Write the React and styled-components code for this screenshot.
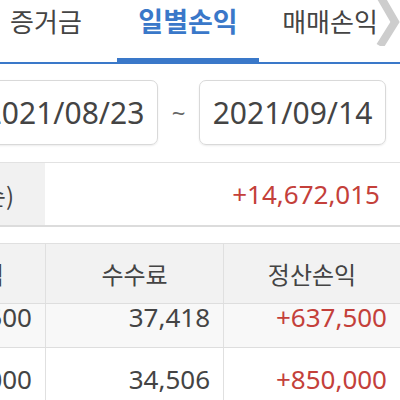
import React from 'react'
import styled, { createGlobalStyle } from 'styled-components'

const Global = createGlobalStyle`
  html, body {
    margin: 0;
    padding: 0;
    background: #fff;
    overflow: hidden;
  }
  body {
    font-family: "Noto Sans", "Noto Sans CJK KR", sans-serif;
    color: #444;
  }
`

const Screen = styled.div`
  position: relative;
  width: 400px;
  height: 400px;
  overflow: hidden;
  background: #fff;
`

const TabBar = styled.div`
  display: flex;
  height: 64px;
  margin-left: -25px;
  box-shadow: inset 0 -2px 0 #3a78c9;
`

const Tab = styled.div`
  flex: 0 0 142px;
  display: flex;
  justify-content: center;
  line-height: 42px;
  font-family: "Noto Sans CJK KR", sans-serif;
  font-size: ${p => (p.active ? '27px' : '26px')};
  font-weight: ${p => (p.active ? 700 : 400)};
  color: ${p => (p.active ? '#3a78c9' : '#444')};
  box-shadow: ${p => (p.active ? 'inset 0 -6px 0 #3a78c9' : 'none')};
  white-space: nowrap;
`

const Chevron = styled.svg`
  position: absolute;
  top: 0;
  right: 0;
`

const DateRow = styled.div`
  display: flex;
  align-items: center;
  margin: 16px 0 0 -29px;
`

const DateBox = styled.div`
  flex: 0 0 185px;
  height: 63px;
  box-sizing: content-box;
  display: flex;
  align-items: center;
  justify-content: center;
  border: 1px solid #d9d9d9;
  border-radius: 7px;
  box-shadow: 0 1px 2px rgba(0, 0, 0, 0.08);
  font-size: 30px;
  color: #444;
`

const Tilde = styled.span`
  flex: 0 0 41px;
  text-align: center;
  font-size: 24px;
  color: #666;
`

const Summary = styled.div`
  display: grid;
  grid-template-columns: 170px 1fr;
  height: 62px;
  margin: 17px 0 0 -125px;
  border-top: 1px solid #e2e2e2;
  border-bottom: 2px solid #dcdcdc;
`

const SummaryLabel = styled.div`
  display: flex;
  align-items: center;
  justify-content: flex-end;
  padding-right: 31px;
  background: #f1f1f1;
  font-family: "Noto Sans CJK KR", sans-serif;
  font-size: 24px;
  white-space: nowrap;
  overflow: hidden;
`

const SummaryValue = styled.div`
  display: flex;
  align-items: center;
  justify-content: flex-end;
  padding-right: 20px;
  font-size: 26px;
  color: #c4403a;
`

const Table = styled.div`
  margin: 16px 0 0 -125px;
  border-top: 1px solid #e0e0e0;
`

const Row = styled.div`
  display: grid;
  grid-template-columns: 170px 178px 1fr;
  height: ${p => (p.head ? '59px' : '61px')};
  background: ${p => (p.head ? '#f2f2f2' : p.shade ? '#f8f8f8' : '#fff')};
  border-bottom: 1px solid #dedede;
`

const Cell = styled.div`
  display: flex;
  align-items: center;
  justify-content: ${p => (p.head ? 'center' : 'flex-end')};
  padding-right: ${p => (p.head ? '0' : '13px')};
  border-left: ${p => (p.first ? 'none' : '1px solid #e0e0e0')};
  font-family: ${p => (p.head ? '"Noto Sans CJK KR", sans-serif' : '"Noto Sans", sans-serif')};
  font-size: ${p => (p.head ? '24px' : '26px')};
  color: ${p => (p.red ? '#c4403a' : '#444')};
  white-space: nowrap;
  overflow: hidden;
`

const Body = styled.div`
  height: 97px;
  overflow: hidden;
`

const Scroll = styled.div`
  margin-top: -18px;
`

const rows = [
  { trade: '674,500', fee: '37,418', net: '+637,500' },
  { trade: '884,000', fee: '34,506', net: '+850,000' },
]

export default function App() {
  return (
    <Screen>
      <Global />
      <TabBar>
        <Tab>증거금</Tab>
        <Tab active>일별손익</Tab>
        <Tab>매매손익</Tab>
      </TabBar>
      <Chevron width="24" height="46" viewBox="0 0 24 46">
        <polyline points="4,-4 19,22 4,46" fill="none" stroke="#cdcdcd" strokeWidth="8" />
      </Chevron>
      <DateRow>
        <DateBox>2021/08/23</DateBox>
        <Tilde>~</Tilde>
        <DateBox>2021/09/14</DateBox>
      </DateRow>
      <Summary>
        <SummaryLabel>누적(손)</SummaryLabel>
        <SummaryValue>+14,672,015</SummaryValue>
      </Summary>
      <Table>
        <Row head>
          <Cell head first>매매손익</Cell>
          <Cell head>수수료</Cell>
          <Cell head>정산손익</Cell>
        </Row>
        <Body>
          <Scroll>
            {rows.map((r, i) => (
              <Row key={i} shade={i % 2 === 0}>
                <Cell first>{r.trade}</Cell>
                <Cell>{r.fee}</Cell>
                <Cell red>{r.net}</Cell>
              </Row>
            ))}
          </Scroll>
        </Body>
      </Table>
    </Screen>
  )
}
